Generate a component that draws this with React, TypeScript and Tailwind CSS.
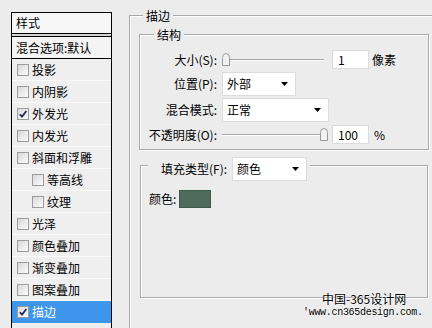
import React from 'react';

interface StyleItem {
  label: string;
  checked?: boolean;
  indent?: boolean;
  active?: boolean;
}

const styleItems: StyleItem[] = [
  { label: '投影' },
  { label: '内阴影' },
  { label: '外发光', checked: true },
  { label: '内发光' },
  { label: '斜面和浮雕' },
  { label: '等高线', indent: true },
  { label: '纹理', indent: true },
  { label: '光泽' },
  { label: '颜色叠加' },
  { label: '渐变叠加' },
  { label: '图案叠加' },
  { label: '描边', checked: true, active: true },
];

function CheckBox({ checked }: { checked?: boolean }) {
  return (
    <span className="flex h-[12px] w-[12px] shrink-0 items-center justify-center border border-[#9c9c9c] bg-linear-to-br from-[#d9d9d9] to-[#fbfbfb]">
      {checked && (
        <svg width="10" height="10" viewBox="0 0 10 10">
          <path d="M1.8 5.2 L4 7.6 L8.4 2" fill="none" stroke="#21215a" strokeWidth="1.7" />
        </svg>
      )}
    </span>
  );
}

function StyleList() {
  return (
    <div className="ml-[11px] mt-[12px] flex w-[101px] shrink-0 flex-col border-x border-t border-black bg-[#efefef]">
      <div className="flex h-[21px] items-center border-b border-black bg-[#f7f7f7] pl-[4px]">样式</div>
      <div className="h-[2px] bg-[#d4d4d4]" />
      <div className="flex h-[23px] items-center border-y border-black bg-[#f4f4f4] pl-[4px]">混合选项:默认</div>
      {styleItems.map((item) => (
        <div
          key={item.label}
          className={`flex h-[22px] items-center gap-[3px] border-b ${
            item.active ? 'border-[#3d95ec] bg-[#3d95ec] text-white' : 'border-[#fafafa]'
          } ${item.indent ? 'pl-[20px]' : 'pl-[5px]'}`}
        >
          <CheckBox checked={item.checked} />
          <span>{item.label}</span>
        </div>
      ))}
    </div>
  );
}

function Title({ children, className }: { children: React.ReactNode; className: string }) {
  return (
    <div className={`-mt-[8px] flex h-[16px] w-fit items-center bg-[#ececec] px-[3px] ${className}`}>{children}</div>
  );
}

function Thumb() {
  return (
    <svg width="8" height="13" viewBox="0 0 8 13">
      <path d="M0.5 4.5 Q0.5 0.5 4 0.5 Q7.5 0.5 7.5 4.5 V12.5 H0.5 Z" fill="#f2f2f2" stroke="#9a9a9a" />
    </svg>
  );
}

function Slider({ value }: { value: number }) {
  return (
    <div className="relative flex h-[19px] w-[102px] items-center">
      <div className="h-[2px] w-full border-t border-[#a6a6a6] bg-white" />
      <div className="absolute top-[3px]" style={{ left: value }}>
        <Thumb />
      </div>
    </div>
  );
}

function NumberBox({ value }: { value: string }) {
  return (
    <div className="ml-[8px] flex h-[19px] w-[37px] items-center border border-[#dcdcdc] bg-white pl-[5px]">
      {value}
    </div>
  );
}

function Dropdown({ value, width }: { value: string; width: string }) {
  return (
    <div className={`flex h-[24px] items-center justify-between border border-[#dcdcdc] bg-white pl-[4px] pr-[7px] ${width}`}>
      <span>{value}</span>
      <svg width="7" height="4" viewBox="0 0 7 4">
        <path d="M0 0 H7 L3.5 4 Z" fill="#000" />
      </svg>
    </div>
  );
}

function Row({ label, className, children }: { label: string; className: string; children: React.ReactNode }) {
  return (
    <div className={`flex items-center ${className}`}>
      <div className="w-[77px] shrink-0 text-right">{label}</div>
      <div className="ml-[5px] flex items-center">{children}</div>
    </div>
  );
}

export default function App() {
  return (
    <div className="relative flex h-[328px] w-[432px] overflow-hidden bg-[#ececec] font-['Noto_Sans_CJK_SC',sans-serif] text-[12px] leading-none text-black">
      <StyleList />

      {/* 描边 group */}
      <div className="ml-[17px] mt-[15px] flex w-[330px] shrink-0 flex-col border-l border-t border-[#a9a9a9] shadow-[inset_1px_1px_0_#fff]">
        <Title className="ml-[13px]">描边</Title>

        {/* 结构 */}
        <div className="ml-[9px] mt-[10px] flex w-[290px] flex-col border border-[#a9a9a9] pb-[5px] shadow-[inset_1px_1px_0_#fff,1px_1px_0_#fff]">
          <Title className="ml-[14px]">结构</Title>
          <Row label="大小(S):" className="mt-[7px] h-[19px]">
            <Slider value={0} />
            <NumberBox value="1" />
            <span className="ml-[3px]">像素</span>
          </Row>
          <Row label="位置(P):" className="mt-[3px] h-[24px]">
            <Dropdown value="外部" width="w-[74px]" />
          </Row>
          <Row label="混合模式:" className="mt-[2px] h-[24px]">
            <Dropdown value="正常" width="w-[107px]" />
          </Row>
          <Row label="不透明度(O):" className="mt-[3px] h-[19px]">
            <Slider value={98} />
            <NumberBox value="100" />
            <span className="ml-[5px]">%</span>
          </Row>
        </div>

        {/* 填充 */}
        <div className="ml-[10px] mt-[15px] flex h-[133px] w-[288px] flex-col border border-[#a9a9a9] shadow-[inset_1px_1px_0_#fff,1px_1px_0_#fff]">
          <div className="-mt-[9px] ml-[7px] flex h-[23px] w-fit items-center gap-[5px] bg-[#ececec] pl-[13px] pr-[3px]">
            <span>填充类型(F):</span>
            <Dropdown value="颜色" width="w-[75px] h-[23px]" />
          </div>
          <div className="mt-[10px] flex items-center gap-[3px] pl-[8px]">
            <span>颜色:</span>
            <div className="h-[18px] w-[32px] border border-[#3f5a4c] bg-[#4f6b5c]" />
          </div>
        </div>
      </div>

      {/* watermark */}
      <div className="absolute left-[322px] top-[293px] text-[12px] [text-shadow:0_0_2px_#fff,0_0_2px_#fff]">中国-365设计网</div>
      <div className="absolute left-[303px] top-[308px] font-['Liberation_Mono',monospace] text-[10px] tracking-[-0.3px] [text-shadow:0_0_2px_#fff,0_0_2px_#fff]">
        'www.cn365design.com.
      </div>
    </div>
  );
}
